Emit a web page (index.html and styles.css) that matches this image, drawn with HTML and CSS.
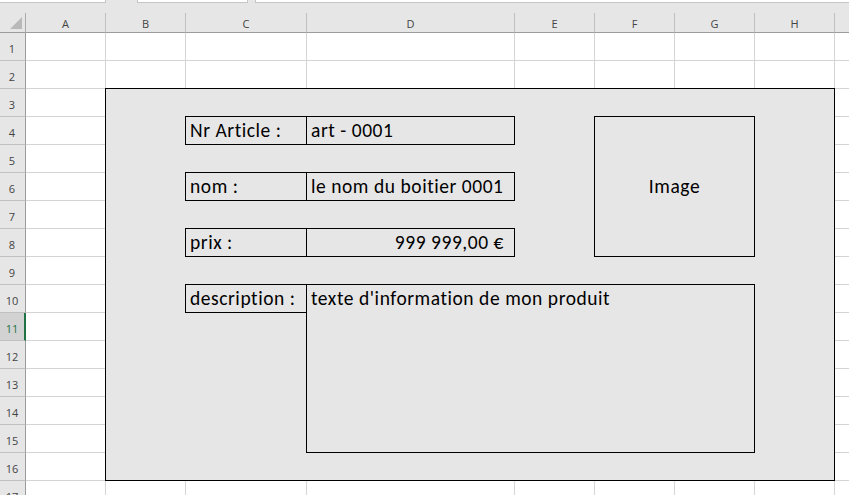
FILE: index.html
```html
<!DOCTYPE html>
<html lang="fr">
<head>
<meta charset="utf-8">
<title>Fiche article</title>
<link rel="stylesheet" href="styles.css">
</head>
<body>
<div class="topbar">
  <div class="tb tb1"></div>
  <div class="tb tb2"></div>
  <div class="tb tb3"></div>
</div>
<div class="sheet">
  <div class="corner"><span class="tri"></span></div>
  <div class="colhead">A</div>
  <div class="colhead">B</div>
  <div class="colhead">C</div>
  <div class="colhead">D</div>
  <div class="colhead">E</div>
  <div class="colhead">F</div>
  <div class="colhead">G</div>
  <div class="colhead">H</div>
  <div class="colhead"></div>

  <div class="rowhead r1">1</div>
  <div class="rowhead r2">2</div>
  <div class="rowhead r3">3</div>
  <div class="rowhead r4">4</div>
  <div class="rowhead r5">5</div>
  <div class="rowhead r6">6</div>
  <div class="rowhead r7">7</div>
  <div class="rowhead r8">8</div>
  <div class="rowhead r9">9</div>
  <div class="rowhead r10">10</div>
  <div class="rowhead r11 sel">11</div>
  <div class="rowhead r12">12</div>
  <div class="rowhead r13">13</div>
  <div class="rowhead r14">14</div>
  <div class="rowhead r15">15</div>
  <div class="rowhead r16">16</div>
  <div class="rowhead r17">17</div>

  <div class="vline c2"></div>
  <div class="vline c3"></div>
  <div class="vline c4"></div>
  <div class="vline c5"></div>
  <div class="vline c6"></div>
  <div class="vline c7"></div>
  <div class="vline c8"></div>
  <div class="vline c9"></div>
  <div class="vline c10"></div>

  <div class="hline r1"></div>
  <div class="hline r2"></div>
  <div class="hline r3"></div>
  <div class="hline r4"></div>
  <div class="hline r5"></div>
  <div class="hline r6"></div>
  <div class="hline r7"></div>
  <div class="hline r8"></div>
  <div class="hline r9"></div>
  <div class="hline r10"></div>
  <div class="hline r11"></div>
  <div class="hline r12"></div>
  <div class="hline r13"></div>
  <div class="hline r14"></div>
  <div class="hline r15"></div>
  <div class="hline r16"></div>
  <div class="hline r17"></div>

  <div class="panel"></div>

  <div class="box lbl nr">Nr Article :</div>
  <div class="box val nr">art - 0001</div>
  <div class="box lbl nom">nom :</div>
  <div class="box val nom">le nom du boitier 0001</div>
  <div class="box lbl prix">prix :</div>
  <div class="box val prix num">999 999,00 €</div>
  <div class="box lbl desc">description :</div>
  <div class="box descval">texte d'information de mon produit</div>
  <div class="box image">Image</div>
</div>
</body>
</html>
```
FILE: styles.css
```css
html, body {
  margin: 0;
  padding: 0;
  width: 849px;
  height: 495px;
  overflow: hidden;
  background: #e6e6e6;
}

.topbar {
  height: 13px;
  display: flex;
  align-items: flex-start;
  background: #e6e6e6;
}
.tb {
  height: 2px;
  background: #ffffff;
  border: 1px solid #c6c6c6;
  border-top: none;
}
.tb1 { width: 105px; border-left: none; }
.tb2 { width: 109px; margin-left: 31px; }
.tb3 { flex: 1; margin-left: 7px; border-right: none; }

.sheet {
  display: grid;
  grid-template-columns: 26px 80px 80px 121px 208px 80px 80px 80px 80px 80px;
  grid-template-rows: 20px repeat(17, 28px);
  background: #ffffff;
  font-family: Carlito, Lato, "Liberation Sans", sans-serif;
}

.corner {
  grid-column: 1;
  grid-row: 1;
  background: #e6e6e6;
  border-right: 1px solid #ababab;
  border-bottom: 1px solid #9b9b9b;
  display: flex;
  align-items: flex-end;
  justify-content: flex-end;
  padding: 0 3px 3px 0;
}
.tri {
  width: 0;
  height: 0;
  border-left: 12px solid transparent;
  border-bottom: 12px solid #b9b9b9;
}

.colhead {
  grid-row: 1;
  background: #e6e6e6;
  border-right: 1px solid #c0c0c0;
  border-bottom: 1px solid #9b9b9b;
  font-family: "Open Sans", "Noto Sans", sans-serif;
  font-size: 11px;
  color: #444444;
  display: flex;
  align-items: center;
  justify-content: center;
  padding-top: 1px;
}

.rowhead {
  grid-column: 1;
  background: #e6e6e6;
  border-right: 1px solid #9b9b9b;
  border-bottom: 1px solid #c0c0c0;
  font-family: "Open Sans", "Noto Sans", sans-serif;
  font-size: 11px;
  color: #444444;
  display: flex;
  align-items: flex-end;
  justify-content: center;
  padding-bottom: 4px;
  padding-right: 1px;
}
.rowhead.sel {
  background: #d2d2d2;
  border-right: 2px solid #217346;
  color: #217346;
  padding-right: 0;
}

.vline {
  grid-row: 2 / 19;
  border-right: 1px solid #d4d4d4;
}
.c2 { grid-column: 2; }
.c3 { grid-column: 3; }
.c4 { grid-column: 4; }
.c5 { grid-column: 5; }
.c6 { grid-column: 6; }
.c7 { grid-column: 7; }
.c8 { grid-column: 8; }
.c9 { grid-column: 9; }
.c10 { grid-column: 10; }

.hline {
  grid-column: 2 / 11;
  border-bottom: 1px solid #d4d4d4;
}
.r1 { grid-row: 2; }
.r2 { grid-row: 3; }
.r3 { grid-row: 4; }
.r4 { grid-row: 5; }
.r5 { grid-row: 6; }
.r6 { grid-row: 7; }
.r7 { grid-row: 8; }
.r8 { grid-row: 9; }
.r9 { grid-row: 10; }
.r10 { grid-row: 11; }
.r11 { grid-row: 12; }
.r12 { grid-row: 13; }
.r13 { grid-row: 14; }
.r14 { grid-row: 15; }
.r15 { grid-row: 16; }
.r16 { grid-row: 17; }
.r17 { grid-row: 18; }

.panel {
  grid-column: 3 / 10;
  grid-row: 4 / 18;
  margin: -1px 0 0 -1px;
  background: #e7e6e6;
  border: 1px solid #000000;
}

.box {
  margin: -1px 0 0 -1px;
  border: 1px solid #000000;
  background: #e7e6e6;
  color: #000000;
  font-size: 19.5px;
  letter-spacing: 0.55px;
  line-height: 23px;
  white-space: nowrap;
  overflow: hidden;
  display: flex;
  align-items: flex-end;
  padding: 0 0 2px 4px;
}
.lbl { grid-column: 4; }
.val { grid-column: 5; }
.nr { grid-row: 5; }
.nom { grid-row: 7; }
.prix { grid-row: 9; }
.desc { grid-row: 11; }
.num {
  justify-content: flex-end;
  padding-right: 10px;
}
.descval {
  grid-column: 5 / 9;
  grid-row: 11 / 17;
  align-items: flex-start;
  padding-top: 2px;
}
.image {
  grid-column: 7 / 9;
  grid-row: 5 / 10;
  align-items: center;
  justify-content: center;
  padding: 0;
}
```
